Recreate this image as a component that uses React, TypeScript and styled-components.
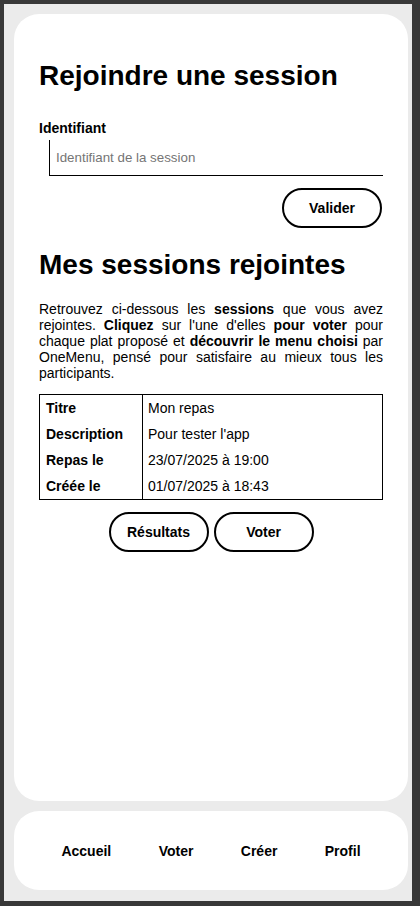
import React from "react";
import styled, { createGlobalStyle } from "styled-components";

const Global = createGlobalStyle`
  html, body {
    margin: 0;
    padding: 0;
    background: #383838;
  }
  * { box-sizing: border-box; }
  body {
    font-family: "Liberation Sans", Arial, sans-serif;
    color: #000;
  }
`;

const Frame = styled.div`
  margin: 4px 8px 5px 4px;
  height: 897px;
  background: #ebebeb;
  padding: 10px 4px 11px 10px;
  display: flex;
  flex-direction: column;
  gap: 10px;
`;

const Card = styled.main`
  flex: 1;
  background: #fff;
  border-radius: 25px;
  padding: 46px 25px 0 25px;
  display: flex;
  flex-direction: column;
`;

const Title = styled.h1<{ $top?: number }>`
  margin: ${(p) => p.$top ?? 0}px 0 0 0;
  font-size: 28px;
  line-height: 32px;
  font-weight: 700;
`;

const Label = styled.label`
  margin-top: 28px;
  font-size: 14px;
  line-height: 16px;
  font-weight: 700;
`;

const Input = styled.input`
  margin: 4px 0 0 10px;
  width: calc(100% - 10px);
  height: 36px;
  border: none;
  border-left: 1px solid #000;
  border-bottom: 1px solid #000;
  padding: 0 0 0 6px;
  font-family: "Liberation Sans", Arial, sans-serif;
  font-size: 13.33px;
  outline: none;
  background: transparent;
  &::placeholder { color: #757575; }
`;

const Pill = styled.button`
  width: 100px;
  height: 40px;
  border: 2px solid #000;
  border-radius: 20px;
  background: #fff;
  font-family: "Liberation Sans", Arial, sans-serif;
  font-size: 14px;
  font-weight: 700;
  color: #000;
  padding: 0;
  cursor: pointer;
`;

const RightRow = styled.div`
  display: flex;
  justify-content: flex-end;
  margin: 12px 1px 0 0;
`;

const Paragraph = styled.p`
  margin: 20px 0 0 0;
  font-size: 14px;
  line-height: 16px;
  text-align: justify;
  b { font-weight: 700; }
`;

const Table = styled.div`
  margin-top: 13px;
  display: grid;
  grid-template-columns: 103px 1fr;
  border: 1px solid #000;
`;

const Key = styled.div`
  border-right: 1px solid #000;
  padding: 5px 6px;
  font-size: 14px;
  line-height: 16px;
  font-weight: 700;
`;

const Value = styled.div`
  padding: 5px 5px;
  font-size: 14px;
  line-height: 16px;
`;

const CenterRow = styled.div`
  display: flex;
  justify-content: center;
  gap: 5px;
  margin-top: 12px;
`;

const Nav = styled.nav`
  height: 79px;
  flex: none;
  background: #fff;
  border-radius: 25px;
  display: flex;
  align-items: center;
  justify-content: space-evenly;
`;

const NavItem = styled.a`
  font-size: 14px;
  font-weight: 700;
  color: #000;
  text-decoration: none;
`;

const rows: [string, string][] = [
  ["Titre", "Mon repas"],
  ["Description", "Pour tester l'app"],
  ["Repas le", "23/07/2025 à 19:00"],
  ["Créée le", "01/07/2025 à 18:43"],
];

export default function App() {
  return (
    <>
      <Global />
      <Frame>
        <Card>
          <Title>Rejoindre une session</Title>
          <Label htmlFor="sid">Identifiant</Label>
          <Input id="sid" placeholder="Identifiant de la session" />
          <RightRow>
            <Pill>Valider</Pill>
          </RightRow>
          <Title $top={21}>Mes sessions rejointes</Title>
          <Paragraph>
            Retrouvez ci-dessous les <b>sessions</b> que vous avez rejointes.{" "}
            <b>Cliquez</b> sur l'une d'elles <b>pour voter</b> pour chaque plat
            proposé et <b>découvrir le menu choisi</b> par OneMenu, pensé pour
            satisfaire au mieux tous les participants.
          </Paragraph>
          <Table>
            {rows.map(([k, v]) => (
              <React.Fragment key={k}>
                <Key>{k}</Key>
                <Value>{v}</Value>
              </React.Fragment>
            ))}
          </Table>
          <CenterRow>
            <Pill>Résultats</Pill>
            <Pill>Voter</Pill>
          </CenterRow>
        </Card>
        <Nav>
          <NavItem>Accueil</NavItem>
          <NavItem>Voter</NavItem>
          <NavItem>Créer</NavItem>
          <NavItem>Profil</NavItem>
        </Nav>
      </Frame>
    </>
  );
}
